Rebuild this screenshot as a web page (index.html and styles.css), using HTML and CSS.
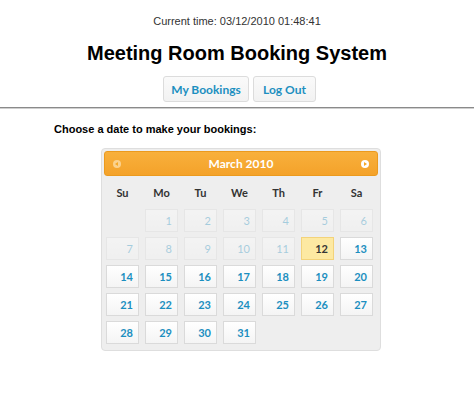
FILE: index.html
```html
<!DOCTYPE html>
<html>
<head>
<meta charset="utf-8">
<link rel="stylesheet" href="styles.css">
</head>
<body>
<div class="time">Current time: 03/12/2010 01:48:41</div>
<h1 class="title">Meeting Room Booking System</h1>
<div class="nav">
  <a class="btn">My Bookings</a>
  <a class="btn">Log Out</a>
</div>
<div class="rule"></div>
<p class="prompt">Choose a date to make your bookings:</p>
<div class="cal">
  <div class="cal-head">
    <span class="arrow prev"></span>
    <span class="month">March 2010</span>
    <span class="arrow next"></span>
  </div>
  <div class="dow">
    <span>Su</span><span>Mo</span><span>Tu</span><span>We</span><span>Th</span><span>Fr</span><span>Sa</span>
  </div>
  <div class="grid">
    <span class="blank"></span>
    <span class="day off">1</span><span class="day off">2</span><span class="day off">3</span><span class="day off">4</span><span class="day off">5</span><span class="day off">6</span>
    <span class="day off">7</span><span class="day off">8</span><span class="day off">9</span><span class="day off">10</span><span class="day off">11</span><span class="day today">12</span><span class="day">13</span>
    <span class="day">14</span><span class="day">15</span><span class="day">16</span><span class="day">17</span><span class="day">18</span><span class="day">19</span><span class="day">20</span>
    <span class="day">21</span><span class="day">22</span><span class="day">23</span><span class="day">24</span><span class="day">25</span><span class="day">26</span><span class="day">27</span>
    <span class="day">28</span><span class="day">29</span><span class="day">30</span><span class="day">31</span>
  </div>
</div>
</body>
</html>
```
FILE: styles.css
```css
html, body { margin: 0; padding: 0; background: #fff; }
body { font-family: "Liberation Sans", Arial, sans-serif; color: #000; }

.time {
  text-align: center;
  font-size: 11px;
  color: #333;
  padding-top: 14px;
  line-height: 14px;
}
.title {
  text-align: center;
  font-size: 20px;
  font-weight: bold;
  margin: 13px 0 0;
  line-height: 24px;
}
.nav {
  display: flex;
  justify-content: center;
  gap: 4px;
  margin-top: 11px;
  padding-left: 5px;
}
.btn {
  display: flex;
  align-items: center;
  justify-content: center;
  box-sizing: border-box;
  height: 26px;
  border: 1px solid #dcdcdc;
  border-radius: 3px;
  background: linear-gradient(#fafafa, #f2f2f2);
  color: #1c8fc0;
  font-family: Lato, "Open Sans", sans-serif;
  font-weight: bold;
  font-size: 12px;
}
.btn:first-child { width: 86px; }
.btn:last-child { width: 63px; }
.rule {
  margin-top: 5px;
  height: 1px;
  background: #8a8a8a;
  border-bottom: 1px solid #cfcfcf;
}
.prompt {
  margin: 13px 0 0 54px;
  font-size: 11px;
  font-weight: bold;
  line-height: 14px;
}
.cal {
  width: 274px;
  margin: 12px 0 0 101px;
  padding: 2px 2px 6px;
  border: 1px solid #dedede;
  border-radius: 4px;
  background: #eeeeee;
  font-family: Lato, "Open Sans", sans-serif;
}
.cal-head {
  height: 25px;
  box-sizing: border-box;
  border: 1px solid #eb9a1e;
  border-radius: 3px;
  background: linear-gradient(#f8b03c, #f4a22a);
  display: flex;
  align-items: center;
  justify-content: space-between;
  padding: 0 8px;
}
.month {
  color: #fff;
  font-weight: bold;
  font-size: 12px;
}
.arrow {
  width: 8px;
  height: 8px;
  border-radius: 50%;
  position: relative;
}
.prev { background: #fbd28e; }
.next { background: #fff; }
.prev::after, .next::after {
  content: "";
  position: absolute;
  top: 2px;
  width: 0; height: 0;
  border-top: 2px solid transparent;
  border-bottom: 2px solid transparent;
}
.prev::after { left: 2px; border-right: 3px solid #f6a828; }
.next::after { left: 3px; border-left: 3px solid #f6a828; }

.dow {
  display: grid;
  grid-template-columns: repeat(7, 33px);
  column-gap: 6px;
  margin: 0 0 0 2px;
  height: 33px;
  align-items: center;
  text-align: center;
  font-size: 11px;
  font-weight: bold;
  color: #333;
}
.grid {
  display: grid;
  grid-template-columns: repeat(7, 33px);
  grid-auto-rows: 23px;
  column-gap: 6px;
  row-gap: 5px;
  margin: 0 0 0 2px;
}
.day {
  box-sizing: border-box;
  border: 1px solid #dadada;
  background: linear-gradient(#ffffff, #f4f4f4);
  color: #1c8fc0;
  font-size: 11px;
  font-weight: bold;
  text-align: right;
  padding-right: 5px;
  line-height: 21px;
}
.day.off {
  opacity: 0.35;
  font-weight: normal;
}
.day.today {
  background: #fde9a2;
  border-color: #f3d37a;
  color: #363636;
}
```
